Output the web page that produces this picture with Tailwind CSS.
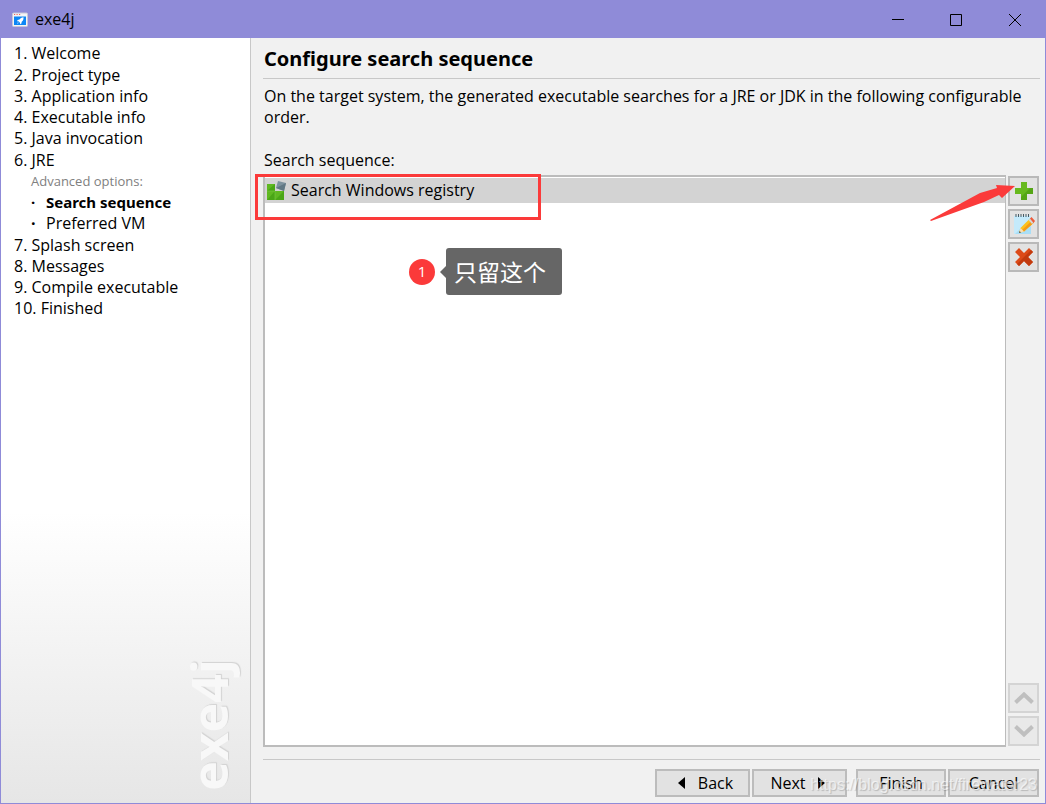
<!DOCTYPE html>
<html lang="en">
<head>
<meta charset="utf-8">
<meta name="viewport" content="width=device-width, initial-scale=1">
<title>exe4j</title>
<script src="https://cdn.jsdelivr.net/npm/@tailwindcss/browser@4"></script>
</head>
<body class="font-['Open_Sans','Noto_Sans_CJK_SC',sans-serif] text-[16px] leading-[21px] text-black">
<div class="relative flex h-screen min-h-[560px] flex-col overflow-hidden border border-[#8f8bd8] bg-[#f1f1f1]">
  <header class="flex h-[37px] shrink-0 items-center bg-[#8f8bd8] pl-[11px]">
    <svg class="size-4" viewBox="0 0 16 16" aria-hidden="true">
      <rect x=".5" y="1" width="15" height="13.5" rx="1" fill="#f4f4f6" stroke="#c9c7d8"/>
      <path d="M2 2.5h1.2M4.500 2.5h1.2M7 2.5h1.2" stroke="#f0655c" stroke-width="1.2"/>
      <path d="M2 4.5h12V13H2z" fill="#0c86f5"/>
      <path d="M11.500 5.200c-2 0-3.300 1-4 2.300L5.700 7.900 5 9.200l1.500.1L8 10.700l.2 1.500 1.200-.8.3-1.700c1.300-.8 2-2.300 1.800-4.500zM6 10.200 5 11.700l1.700-.8z" fill="#fff"/>
    </svg>
    <h1 class="ml-[7px] flex-1">exe4j</h1>
    <div class="flex h-full">
      <button aria-label="Minimize" class="grid w-[58px] place-items-center"><svg class="size-3" viewBox="0 0 12 12"><path d="M0 5.500h12" stroke="#000"/></svg></button>
      <button aria-label="Maximize" class="grid w-[58px] place-items-center"><svg class="size-3" viewBox="0 0 12 12"><path d="M.5.5h11v11H.5z" fill="none" stroke="#000"/></svg></button>
      <button aria-label="Close" class="grid w-[60px] place-items-center"><svg class="size-3" viewBox="0 0 12 12"><path d="M0 0l12 12M12 0 0 12" stroke="#000"/></svg></button>
    </div>
  </header>

  <div class="flex min-h-0 flex-1">
    <nav class="relative w-[250px] shrink-0 border-r border-[#c8c8c8] bg-linear-to-b from-white from-62% to-[#e6e6e6] pt-[5px] pl-[13px]" aria-label="Steps">
      <ol>
        <li>1. Welcome</li>
        <li class="pt-px">2. Project type</li>
        <li>3. Application info</li>
        <li>4. Executable info</li>
        <li>5. Java invocation</li>
        <li class="pt-px">6. JRE
          <div class="pl-[17px] text-[13px] leading-[21px] text-[#808080]">Advanced options:</div>
          <ul class="pl-[17px]">
            <li class="flex font-['Noto_Sans',sans-serif] text-[15px] font-bold"><span class="w-[15px]">·</span>Search sequence</li>
            <li class="flex"><span class="w-[15px] font-bold">·</span>Preferred VM</li>
          </ul>
        </li>
        <li class="pt-px">7. Splash screen</li>
        <li>8. Messages</li>
        <li>9. Compile executable</li>
        <li>10. Finished</li>
      </ol>
      <div class="absolute right-4 bottom-3 rotate-180 font-['Open_Sans',sans-serif] text-[50px] leading-[50px] font-bold text-[#f8f8f8] [writing-mode:vertical-rl] [text-shadow:1px_1px_1px_#d2d2d2]" aria-hidden="true">exe4j</div>
    </nav>

    <main class="flex min-w-0 flex-1 flex-col pr-[5px] pb-[6px] pl-3">
      <h2 class="h-[41px] border-b border-[#c8c8c8] pt-[7px] pl-px font-['Noto_Sans',sans-serif] text-[20px] leading-7 font-bold">Configure search sequence</h2>
      <p class="mt-[7px] pl-px">On the target system, the generated executable searches for a JRE or JDK in the following configurable order.</p>
      <h3 class="mt-[22px] mb-1 pl-px" id="seq">Search sequence:</h3>

      <div class="flex min-h-0 flex-1">
        <div class="relative min-w-0 flex-1 border-2 border-r border-[#bcbcbc] bg-white pt-px" role="listbox" aria-labelledby="seq">
          <div class="flex h-[25px] items-center gap-[5px] bg-[#d3d3d3] pl-[2px]" role="option" aria-selected="true">
            <svg class="size-[19px]" viewBox="0 0 19 19" aria-hidden="true">
              <path d="M0 3h8v7h9v9H0z" fill="#5fb821"/>
              <path d="M8 3v7H0zM8 10v9H0zM17 10v9H8z" fill="#4aa616"/>
              <path d="M0 10h8M8 10v9" stroke="#7ac943" stroke-width=".6"/>
              <path d="m11 0 8 2-2 8-8-3z" fill="#7d929e"/><path d="m19 2-2 8-8-3z" fill="#617884"/>
            </svg>
            <span>Search Windows registry</span>
          </div>
          <div class="absolute -top-[3px] -left-[10px] h-[46px] w-[286px] border-3 border-[#fb3a3a]"></div>
          <div class="absolute top-[71px] left-36 flex items-center">
            <span class="grid size-[26px] place-items-center rounded-full bg-[#fb3a3a] text-[15px] text-white">1</span>
            <svg class="ml-[5px] h-3 w-[6px]" viewBox="0 0 6 12" aria-hidden="true"><path d="M6 0v12L0 6z" fill="#666"/></svg>
            <span class="h-[47px] w-[116px] rounded-[3px] bg-[#666] pl-2 font-['Noto_Sans_CJK_SC',sans-serif] text-[23px] leading-[47px] text-white" lang="zh">只留这个</span>
          </div>
        </div>

        <div class="relative ml-[2px] mr-px flex w-[31px] flex-col gap-[3px] pt-px pb-px">
          <button aria-label="Add" class="grid h-[30px] place-items-center border-2 border-[#b9b9b9] bg-[#e2e2e2]"><svg class="size-[18px]" viewBox="0 0 18 18"><path d="M6 0h6v6h6v6h-6v6H6v-6H0V6h6z" fill="#67b91e"/><path d="M18 6v6h-6v6H6v-3l9-9z" fill="#55a516"/></svg></button>
          <button aria-label="Edit" class="grid h-[30px] place-items-center border-2 border-[#b9b9b9] bg-[#e2e2e2]"><svg class="size-[22px]" viewBox="0 0 22 22"><path d="M1 3h17v18H1z" fill="#c4eafb"/><path d="M18 5v16H2z" fill="#a9def6"/><path d="M3 1v3M5.500 1v3M8 1v3M10.500 1v3M13 1v3M15.500 1v3" stroke="#455a64"/><path d="m6 20 1.500-5L17 5.500l4 4L11 18.500z" fill="#fdc21b"/><path d="m9 17 10-9.500 2 2L11 18.500z" fill="#f49b16"/><path d="m15.500 7 2-2 3.500 4-2 2z" fill="#d7d7d7"/><path d="m17 5.500 1.500-1.500 3.500 4-1.500 2z" fill="#ee5a3a"/><path d="m6 20 1.500-5 3.500 3.500z" fill="#f8dfb5"/><path d="m6 20 .6-2 1.400 1.400z" fill="#444"/></svg></button>
          <button aria-label="Remove" class="grid h-[30px] place-items-center border-2 border-[#b9b9b9] bg-[#e2e2e2]"><svg class="size-[18px]" viewBox="0 0 18 18"><path d="M4 0 9 5l5-5 4 4-5 5 5 5-4 4-5-5-5 5-4-4 5-5-5-5z" fill="#dc4a18"/><path d="m18 4-5 5 5 5-4 4-5-5-5 5-2-2L16 2z" fill="#c23a0e"/></svg></button>
          <button aria-label="Move up" disabled class="mt-auto grid h-[30px] place-items-center border-2 border-[#d4d4d4] bg-[#e9e9e9]"><svg class="h-3 w-5" viewBox="0 0 20 12"><path d="m1.500 10.500 8.500-8 8.500 8" fill="none" stroke="#bfbfbf" stroke-width="4"/></svg></button>
          <button aria-label="Move down" disabled class="grid h-[30px] place-items-center border-2 border-[#d4d4d4] bg-[#e9e9e9]"><svg class="h-3 w-5" viewBox="0 0 20 12"><path d="m1.500 1.500 8.500 8 8.500-8" fill="none" stroke="#bfbfbf" stroke-width="4"/></svg></button>
          <svg class="pointer-events-none absolute top-[9px] right-[24px] h-[38px] w-[85px]" viewBox="0 0 85 38" aria-hidden="true"><path d="M0 36 50 9 67 4 66 1l19 1-13 12-3-3-15 7L1 37z" fill="#fb3a3a"/></svg>
        </div>
      </div>

      <footer class="mt-3 flex justify-end border-t border-[#c8c8c8] pt-[9px] pr-px">
        <button class="flex h-7 w-[95px] items-center justify-center gap-[13px] border-2 border-[#bcbcbc] bg-[#e2e2e2] pl-[6px]"><svg class="h-3 w-[7px]" viewBox="0 0 7 12"><path d="M7 0v12L0 6z"/></svg>Back</button>
        <button class="ml-[2px] flex h-7 w-[95px] items-center justify-center gap-3 border-2 border-[#bcbcbc] bg-[#e2e2e2] pr-1">Next<svg class="h-3 w-[7px]" viewBox="0 0 7 12"><path d="M0 0v12l7-6z"/></svg></button>
        <button class="ml-[9px] h-7 w-[90px] border-2 border-[#bcbcbc] bg-[#e2e2e2]">Finish</button>
        <button class="ml-[2px] h-7 w-[91px] border-2 border-[#bcbcbc] bg-[#e2e2e2]">Cancel</button>
      </footer>
    </main>
  </div>
  <div class="pointer-events-none absolute right-2 bottom-2 font-['Liberation_Sans',sans-serif] text-[16px] text-white/60 [text-shadow:1px_1px_1px_#00000030]">https://blog.csdn.net/firewater23</div>
</div>
</body>
</html>
